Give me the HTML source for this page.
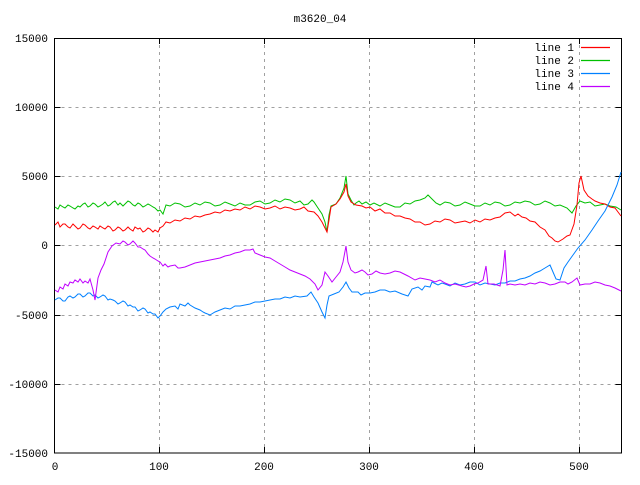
<!DOCTYPE html>
<html><head><style>
body{margin:0;background:#fff;width:640px;height:480px;overflow:hidden}
svg text{font-family:"Liberation Mono","DejaVu Sans Mono",monospace;font-size:11px;fill:#000}
</style></head><body>
<svg width="640" height="480" xmlns="http://www.w3.org/2000/svg">
<rect width="640" height="480" fill="#fff"/>
<g stroke="#a0a0a0" stroke-width="1" stroke-dasharray="3,4" fill="none">
<path d="M54.5 107.5H621.5M54.5 176.5H621.5M54.5 245.5H621.5M54.5 315.5H621.5M54.5 384.5H621.5"/>
<path d="M159.5 38V453M264.5 38V453M369.5 38V453M474.5 38V453M579.5 38V453"/>
</g>
<g stroke="#000" stroke-width="1" fill="none">
<rect x="54.5" y="38.5" width="567" height="414.5"/>
<path d="M54.5 107.5h6M54.5 176.5h6M54.5 245.5h6M54.5 315.5h6M54.5 384.5h6M621.5 107.5h-6M621.5 176.5h-6M621.5 245.5h-6M621.5 315.5h-6M621.5 384.5h-6"/>
<path d="M159.5 453v-6M264.5 453v-6M369.5 453v-6M474.5 453v-6M579.5 453v-6M159.5 38v6M264.5 38v6M369.5 38v6M474.5 38v6M579.5 38v6"/>
</g>
<text x="320" y="22" text-anchor="middle">m3620_04</text>
<g text-anchor="end">
<text x="48" y="42">15000</text><text x="48" y="111">10000</text><text x="48" y="180">5000</text>
<text x="48" y="249">0</text><text x="48" y="319">-5000</text><text x="48" y="388">-10000</text><text x="48" y="457">-15000</text>
</g>
<g text-anchor="middle">
<text x="55" y="470">0</text><text x="159" y="470">100</text><text x="264" y="470">200</text><text x="369" y="470">300</text><text x="474" y="470">400</text><text x="579" y="470">500</text>
</g>
<g text-anchor="end">
<text x="574" y="51">line 1</text><text x="574" y="64">line 2</text><text x="574" y="77">line 3</text><text x="574" y="90">line 4</text>
</g>
<g stroke-width="1.2">
<line x1="581" y1="47.5" x2="610" y2="47.5" stroke="#ff0000"/>
<line x1="581" y1="60.5" x2="610" y2="60.5" stroke="#00c000"/>
<line x1="581" y1="73.5" x2="610" y2="73.5" stroke="#0080ff"/>
<line x1="581" y1="86.5" x2="610" y2="86.5" stroke="#c000ff"/>
</g>
<g fill="none" stroke-width="1">
<polyline stroke="#00c000" points="55,207 58,209 60,205 63,207 65,208 68,205 70,206 73,208 75,209 78,206 80,207 83,204 85,203 88,207 90,206 93,203 95,204 98,207 100,206 103,204 105,202 108,206 110,205 113,202 115,201 118,205 120,203 123,206 125,204 128,201 130,202 133,205 135,206 138,203 140,204 143,207 145,206 148,204 150,205 153,207 155,208 158,211 160,210 163,214 166,205 170,206 175,203 180,204 185,207 190,206 195,203 200,205 205,202 210,203 215,206 220,205 225,202 230,204 235,206 240,203 245,205 250,205 255,202 260,201 265,204 270,203 275,200 280,202 285,199 290,200 295,203 300,201 304,205 308,204 312,200 314,202 318,208 322,214 325,222 327,232 329,215 331,206 336,204 340,198 344,188 346,176 348,194 351,200 354,205 356,203 359,201 362,204 366,202 370,205 374,203 380,206 385,203 390,205 395,207 400,207 405,203 410,204 415,201 420,200 425,198 428,195 432,199 436,203 440,205 445,202 450,203 455,206 460,205 465,202 470,204 475,206 480,206 485,203 490,205 495,202 500,203 505,206 510,205 515,202 520,203 525,201 530,202 535,205 540,204 545,201 550,203 555,206 560,205 567,208 572,213 576,206 580,201 585,203 590,202 595,206 600,205 605,204 610,206 616,207 621,210"/>
<polyline stroke="#ff0000" points="55,225 58,222 60,227 63,224 65,224 68,227 70,228 73,224 75,226 78,229 80,228 83,224 85,225 88,228 90,229 93,226 95,227 98,229 100,226 103,228 105,229 108,226 110,227 113,231 115,230 118,227 120,228 123,231 125,230 128,227 130,229 133,231 135,227 138,229 140,228 143,232 145,231 148,228 150,229 153,232 155,230 158,232 160,228 163,226 166,222 170,223 175,220 180,221 185,218 190,219 195,216 200,217 205,215 210,214 215,212 220,213 225,210 230,211 235,209 240,210 245,207 250,209 255,206 260,207 265,209 270,208 275,206 280,209 285,207 290,208 295,210 300,209 304,207 308,211 314,212 318,216 322,222 325,228 327,232 329,220 331,207 336,204 340,199 344,192 346,184 348,196 351,202 356,205 362,206 366,208 370,207 375,211 380,209 385,213 390,213 395,216 400,216 405,218 410,219 415,222 420,222 425,225 430,224 435,221 440,222 445,219 450,220 455,223 460,222 465,221 470,223 475,220 480,222 485,219 490,220 495,218 500,217 505,213 510,212 515,216 518,214 522,217 526,218 530,221 535,222 540,227 545,230 549,236 552,238 555,241 558,242 563,239 567,236 570,235 574,224 577,205 579,183 581,176 584,190 588,196 592,199 595,201 600,203 605,204 610,207 615,208 618,212 621,216"/>
<polyline stroke="#0080ff" points="55,300 58,298 60,298 63,301 65,301 68,297 70,296 73,298 75,297 78,294 80,294 83,297 85,296 88,293 90,293 93,296 95,295 98,298 100,297 103,295 105,296 108,300 110,299 113,300 115,301 118,304 120,303 123,301 125,302 128,306 130,305 133,307 135,307 138,311 140,310 143,308 145,309 148,313 150,312 153,314 155,314 158,318 160,316 163,312 166,309 170,307 175,306 178,309 180,304 185,306 188,303 190,305 195,308 200,310 203,312 205,313 210,315 215,312 220,310 225,308 230,309 235,306 240,306 245,305 250,304 255,302 260,302 265,301 270,300 275,299 280,299 285,297 290,298 295,296 300,297 307,296 311,292 314,297 318,303 322,312 325,318 327,305 329,296 334,294 339,292 343,287 346,282 349,288 352,292 358,292 361,295 365,293 370,293 375,292 380,290 385,290 390,292 395,291 402,294 408,296 412,289 418,287 422,290 425,286 430,287 432,282 438,285 442,283 445,284 450,286 455,283 460,285 465,284 470,282 475,282 480,285 485,283 490,284 495,285 500,283 505,283 510,281 515,281 520,279 525,278 530,276 535,273 540,271 545,268 550,265 553,272 556,279 560,280 564,268 568,262 573,255 578,248 585,240 592,230 598,221 605,211 612,197 617,185 621,172"/>
<polyline stroke="#c000ff" points="55,290 58,292 60,287 63,289 65,284 68,286 70,282 73,283 75,280 78,282 80,279 83,283 85,281 88,283 90,279 93,290 95,300 98,278 101,270 104,264 108,252 112,246 116,243 120,244 123,241 125,242 128,245 130,244 133,241 135,243 138,247 140,247 143,249 145,250 148,254 150,256 153,258 155,259 158,261 160,262 163,266 165,264 168,267 170,266 175,265 178,268 180,268 185,267 190,265 195,263 200,262 205,261 210,260 215,259 220,258 225,256 230,255 235,253 240,252 245,250 250,250 253,249 255,253 260,255 265,257 270,258 275,261 280,264 285,267 290,270 295,272 300,274 305,276 310,279 315,284 318,290 322,285 325,272 328,276 332,282 336,277 340,272 343,262 346,246 348,262 351,270 355,273 358,272 362,270 365,272 368,275 372,274 376,271 380,273 385,274 390,273 395,271 400,272 404,274 408,276 415,280 420,278 425,279 430,280 435,282 440,280 445,283 450,285 455,284 462,286 466,287 470,286 474,284 478,283 483,280 486,266 488,284 494,284 500,286 503,270 505,250 507,285 510,284 515,285 520,284 525,285 530,283 535,284 540,282 545,283 550,285 555,284 560,282 565,282 568,284 572,282 577,278 580,285 585,284 590,284 595,282 600,283 605,285 610,286 615,288 621,291"/>
</g>
</svg>
</body></html>
